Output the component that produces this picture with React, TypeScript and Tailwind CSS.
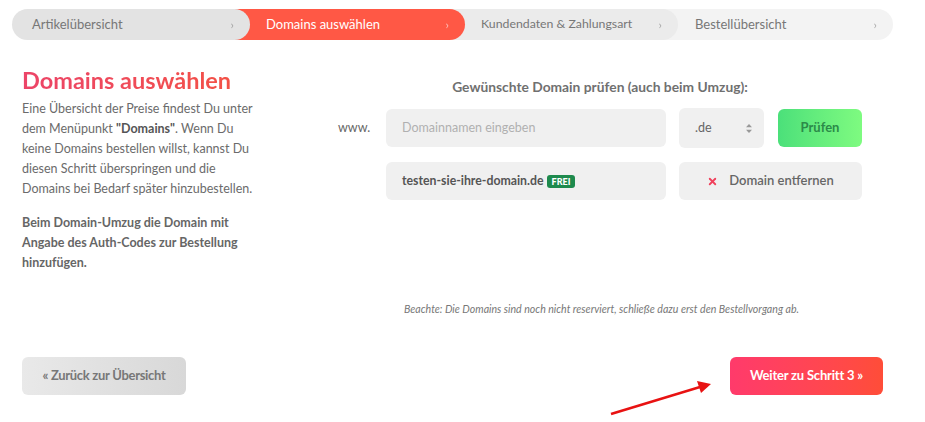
import { X } from 'lucide-react';

const steps = [
  { label: 'Artikelübersicht', cls: 'bg-[#e3e3e3] text-[#777] w-[238px] pl-[20px] z-40 rounded-full' },
  { label: 'Domains auswählen', cls: 'bg-[#ff5845] text-white w-[230px] pl-[31px] -ml-[15px] z-30 rounded-r-full' },
  { label: 'Kundendaten & Zahlungsart', cls: 'bg-[#ebebeb] text-[#777] w-[228px] pl-[31px] -ml-[15px] z-20 rounded-r-full' },
  { label: 'Bestellübersicht', cls: 'bg-[#f3f3f3] text-[#777] w-[230px] pl-[32px] -ml-[15px] z-10 rounded-r-full' },
];

export default function App() {
  return (
    <div className="relative w-[925px] h-[422px] overflow-hidden bg-white font-['Lato','Open_Sans',sans-serif] text-[#666]">
      {/* steps */}
      <div className="flex pl-[12px] pt-[9px]">
        {steps.map((s) => (
          <div
            key={s.label}
            className={`relative flex h-[31px] shrink-0 items-center justify-between pr-[16px] text-[13px] ${s.cls}`}
          >
            <span className={s.label.startsWith('Kunden') ? 'text-[12.3px]' : ''}>{s.label}</span>
            <span className="text-[12px] opacity-60">›</span>
          </div>
        ))}
      </div>

      <div className="flex">
        {/* left */}
        <div className="w-[265px] shrink-0 pl-[22px] pt-[25px]">
          <h1 className="bg-gradient-to-r from-[#ec4468] to-[#f4533f] bg-clip-text text-[23.5px] font-bold leading-[30px] text-transparent">
            Domains auswählen
          </h1>
          <p className="mt-[4px] text-[12.5px] leading-[20px] text-[#6b6b6b]">
            Eine Übersicht der Preise findest Du unter
            <br />
            dem Menüpunkt <b className="text-[#555]">"Domains"</b>. Wenn Du
            <br />
            keine Domains bestellen willst, kannst Du
            <br />
            diesen Schritt überspringen und die
            <br />
            Domains bei Bedarf später hinzubestellen.
          </p>
          <p className="mt-[14px] text-[12.5px] font-bold leading-[20px] text-[#666]">
            Beim Domain-Umzug die Domain mit
            <br />
            Angabe des Auth-Codes zur Bestellung
            <br />
            hinzufügen.
          </p>
        </div>

        {/* right */}
        <div className="w-[597px] shrink-0 pl-[73px] pt-[37px]">
          <h2 className="text-center text-[13.8px] font-bold leading-[20px] text-[#707070]">
            Gewünschte Domain prüfen (auch beim Umzug):
          </h2>
          <div className="mt-[11px] flex items-center">
            <span className="w-[48px] shrink-0 text-[12.5px] text-[#666]">www.</span>
            <div className="flex h-[38px] w-[280px] shrink-0 items-center rounded-md bg-[#f0f0f0] pl-[16px] text-[12.5px] text-[#b0b0b0]">
              Domainnamen eingeben
            </div>
            <div className="ml-[13px] flex h-[40px] w-[85px] shrink-0 items-center justify-between rounded-md bg-[#f0f0f0] pl-[16px] pr-[12px] text-[12.5px] text-[#666]">
              <span>.de</span>
              <svg width="6" height="9" viewBox="0 0 6 9" fill="#999">
                <path d="M3 0L6 3.3H0z" />
                <path d="M3 9L0 5.7H6z" />
              </svg>
            </div>
            <div className="ml-[14px] flex h-[38px] w-[84px] shrink-0 items-center justify-center rounded-md bg-gradient-to-r from-[#4be07a] to-[#7efb80] text-[13px] font-bold text-[#2b8a49]">
              Prüfen
            </div>
          </div>
          <div className="mt-[14px] flex items-center pl-[48px]">
            <div className="flex h-[38px] w-[280px] shrink-0 items-center gap-[2px] rounded-md bg-[#f0f0f0] pl-[16px] text-[12.3px] font-bold text-[#555]">
              testen-sie-ihre-domain.de
              <span className="ml-[1px] rounded-[3px] bg-[#1e8a4d] px-[5px] py-[1px] text-[9px] font-black leading-[11px] text-white">
                FREI
              </span>
            </div>
            <div className="ml-[13px] flex h-[38px] w-[183px] shrink-0 items-center justify-center gap-[11px] rounded-md bg-[#f0f0f0] text-[13px] text-[#666]">
              <X size={11} strokeWidth={4} className="text-[#f0405c]" />
              <span className="font-semibold">Domain entfernen</span>
            </div>
          </div>
          <p className="mt-[102px] pl-[3px] text-center text-[10.6px] italic text-[#777]">
            Beachte: Die Domains sind noch nicht reserviert, schließe dazu erst den Bestellvorgang ab.
          </p>
        </div>
      </div>

      {/* footer */}
      <div className="mt-[39px] flex justify-between pl-[22px] pr-[42px]">
        <div className="flex h-[38px] w-[164px] items-center justify-center rounded-md bg-gradient-to-r from-[#e9e9e9] to-[#d8d8d8] text-[13px] font-bold tracking-[-0.3px] text-[#777]">
          « Zurück zur Übersicht
        </div>
        <div className="flex h-[38px] w-[153px] items-center justify-center rounded-md bg-gradient-to-r from-[#ff3a6b] to-[#ff4d38] text-[13px] font-bold tracking-[-0.2px] text-white">
          Weiter zu Schritt 3 »
        </div>
      </div>

      {/* annotation arrow */}
      <svg className="absolute left-[600px] top-[375px]" width="120" height="47" viewBox="0 0 120 47">
        <line x1="11" y1="39" x2="100" y2="12" stroke="#e81212" strokeWidth="2.5" />
        <path d="M111 9L97 6L101 18z" fill="#e81212" />
      </svg>
    </div>
  );
}
